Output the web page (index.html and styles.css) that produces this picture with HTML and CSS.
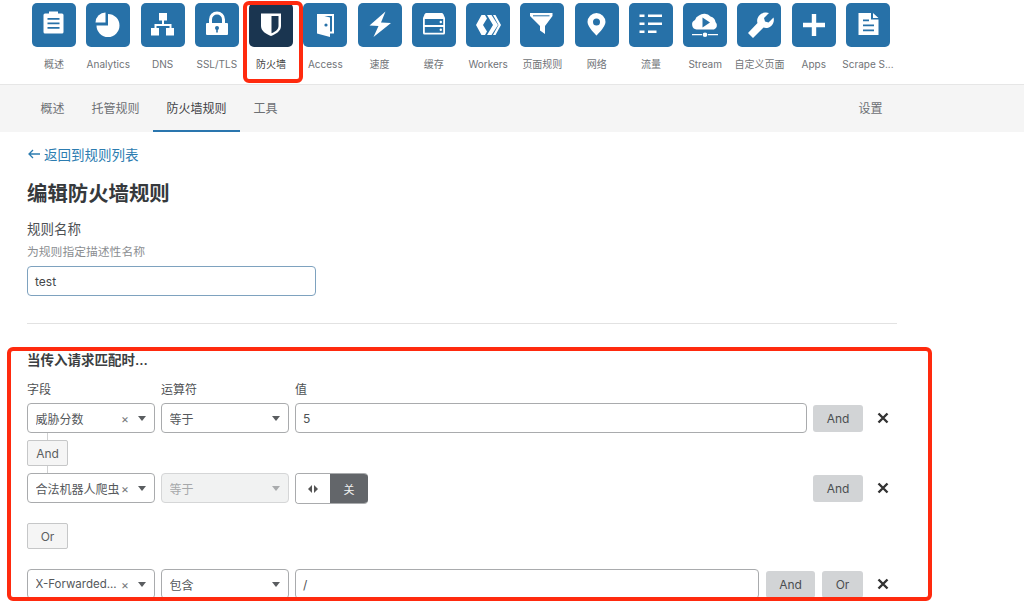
FILE: index.html
```html
<!DOCTYPE html>
<html lang="zh">
<head>
<meta charset="utf-8">
<title>编辑防火墙规则</title>
<link rel="stylesheet" href="styles.css">
</head>
<body>
<div class="page">
  <header class="apps">
    <div class="app"><div class="tile"><svg viewBox="0 0 44 44"><path fill="#fff" d="M17 8.500h9v2h4a1.500 1.500 0 0 1 1.500 1.500v17a1.500 1.500 0 0 1-1.500 1.500H13a1.500 1.500 0 0 1-1.500-1.500V12a1.500 1.500 0 0 1 1.500-1.500h4z"/><path fill="#2771a8" d="M15.500 15h12v1.800h-12zM15.500 19.500h12v1.800h-12zM15.500 24h12v1.800h-12z"/></svg></div><span class="app-name">概述</span></div>
    <div class="app"><div class="tile"><svg viewBox="0 0 44 44"><path fill="#fff" d="M22 11a11.500 11.500 0 1 1-11.500 11.500H22z"/><path fill="#fff" d="M19.500 9.500v10h-10a10 10 0 0 1 10-10z"/></svg></div><span class="app-name">Analytics</span></div>
    <div class="app"><div class="tile"><svg viewBox="0 0 44 44"><path fill="#fff" d="M18 10h8v7.500h-3v3.500h7.500v4H33v7.500h-8V25h3.500v-2h-13v2H18v7.500h-8V25h3.500v-4H21v-3.500h-3z"/></svg></div><span class="app-name">DNS</span></div>
    <div class="app"><div class="tile"><svg viewBox="0 0 44 44"><path fill="none" stroke="#fff" stroke-width="3" d="M15.500 21v-4.500a6.500 6.500 0 0 1 13 0V21"/><rect fill="#fff" x="11" y="20" width="22" height="12" rx="1"/><circle fill="#2771a8" cx="22" cy="25" r="2"/><rect fill="#2771a8" x="21.200" y="25.500" width="1.600" height="4"/></svg></div><span class="app-name">SSL/TLS</span></div>
    <div class="app"><div class="tile tile-active"><svg viewBox="0 0 44 44"><path fill="#fff" d="M12 10.500h20V23c0 5-5 8-10 10C17 31 12 28 12 23z"/><path fill="#1a3550" d="M22.500 13h7v10c0 3.500-3.500 5.800-7 7.300z"/></svg></div><span class="app-name app-name-dark">防火墙</span></div>
    <div class="app"><div class="tile"><svg viewBox="0 0 44 44"><path fill="#fff" d="M14 11h17v19.500h-4v-2h2V13H14z"/><path fill="#fff" d="M14 11l13 3.500V34l-13-3.500z"/><circle fill="#2771a8" cx="23" cy="22" r="1.600"/></svg></div><span class="app-name">Access</span></div>
    <div class="app"><div class="tile"><svg viewBox="0 0 44 44"><path fill="#fff" d="M27.500 8.500L23 19.500l10 .5-17.500 14 5-11-9-.5z"/></svg></div><span class="app-name">速度</span></div>
    <div class="app"><div class="tile"><svg viewBox="0 0 44 44"><path fill="#fff" d="M14.500 10h15c1 0 1.600.6 2 1.500L33 15v15a1.500 1.500 0 0 1-1.500 1.500h-19A1.500 1.500 0 0 1 11 30V15l1.500-3.500c.4-.9 1-1.500 2-1.500z"/><path fill="#2771a8" d="M12.800 16h18.400v6H12.800zM12.800 24h18.400v5.700H12.800z"/><circle fill="#fff" cx="28.800" cy="19" r="1.200"/><circle fill="#fff" cx="28.800" cy="26.800" r="1.200"/></svg></div><span class="app-name">缓存</span></div>
    <div class="app"><div class="tile"><svg viewBox="0 0 44 44"><path fill="#fff" d="M15.500 12H19l2 3.500-4 6.500 4 6.500-2 3.500h-3.500L10 22zM21 12h4.500L32 22l-6.500 10H21l6-10zM27 12h2.500L35 22l-5.500 10H27l5.500-10z"/></svg></div><span class="app-name">Workers</span></div>
    <div class="app"><div class="tile"><svg viewBox="0 0 44 44"><path fill="#fff" d="M10 10h22.500v3L25 23v8l-5-3.500V23L10 13z"/><path fill="#2771a8" d="M13 12.300h16.500v1H13z"/></svg></div><span class="app-name">页面规则</span></div>
    <div class="app"><div class="tile"><svg viewBox="0 0 44 44"><path fill="#fff" fill-rule="evenodd" d="M21.500 10a9 9 0 0 1 9 9c0 5-9 13.500-9 13.500S12.500 24 12.500 19a9 9 0 0 1 9-9zm0 5.500a3.500 3.500 0 1 0 0 7 3.500 3.500 0 0 0 0-7z"/></svg></div><span class="app-name">网络</span></div>
    <div class="app"><div class="tile"><svg viewBox="0 0 44 44"><path fill="#fff" d="M10.500 11.500h5v2.600h-5zM19 11.500h14v2.600H19zM10.500 19.500h5v2.600h-5zM19 19.500h14v2.600H19zM10.500 27.500h5v2.600h-5zM19 27.500h8.500v2.600H19z"/></svg></div><span class="app-name">流量</span></div>
    <div class="app"><div class="tile"><svg viewBox="0 0 44 44"><path fill="#fff" d="M13.500 26.500a5 5 0 0 1-1.500-9.500 6.500 6.500 0 0 1 4-4.500 8.500 8.500 0 0 1 11.500 1 6.500 6.500 0 0 1 5 5.500 4.500 4.500 0 0 1-1.500 7.500z"/><path fill="#2771a8" d="M19.500 14.500l7.500 5-7.500 5z"/><path fill="#fff" d="M9 31h10v1.300H9zM25 31h10v1.300H25z"/><circle fill="#fff" cx="22" cy="31.700" r="2.300"/></svg></div><span class="app-name">Stream</span></div>
    <div class="app"><div class="tile"><svg viewBox="0 0 44 44"><path fill="#fff" d="M28 9.500a8 8 0 0 1 4 .5l-5 5 1 3.500 3.500 1 5-5c1 3.500 0 7-3 9-2.500 1.700-5 1.800-7 1L16 35l-5-5 9.500-10c-.8-2.500-.3-5 1.500-7.300 1.500-2 3.500-3 6-3.200z"/></svg></div><span class="app-name">自定义页面</span></div>
    <div class="app"><div class="tile"><svg viewBox="0 0 44 44"><path fill="#fff" d="M19.800 11h4.400v8.800H33v4.400h-8.800V33h-4.400v-8.800H11v-4.400h8.800z"/></svg></div><span class="app-name">Apps</span></div>
    <div class="app"><div class="tile"><svg viewBox="0 0 44 44"><path fill="#fff" d="M12.500 10H25v6.500h7.500V32h-20zM27 10l5.500 5H27z"/><path fill="#2771a8" d="M17 16.500h6v1.800h-6zM17 21.500h11v1.800H17zM17 26.500h11v1.800H17z"/></svg></div><span class="app-name">Scrape S...</span></div>
  </header>

  <nav class="tabs">
    <a class="tab">概述</a>
    <a class="tab">托管规则</a>
    <a class="tab tab-active">防火墙规则</a>
    <a class="tab">工具</a>
    <a class="tab tab-end">设置</a>
  </nav>

  <main class="content">
    <a class="back"><svg class="back-arrow" viewBox="0 0 12 10"><path fill="none" stroke="#2c7cb0" stroke-width="1.300" d="M12 5H1M5 1L1 5l4 4"/></svg>返回到规则列表</a>
    <h1 class="title">编辑防火墙规则</h1>
    <div class="name-label">规则名称</div>
    <div class="name-help">为规则指定描述性名称</div>
    <div class="name-input">test</div>
    <hr class="divider">

    <h2 class="section">当传入请求匹配时...</h2>
    <div class="heads">
      <span class="head">字段</span>
      <span class="head">运算符</span>
      <span class="head">值</span>
    </div>

    <div class="row">
      <div class="select"><span class="select-text">威胁分数</span><span class="clear">×</span><span class="caret"></span></div>
      <div class="select"><span class="select-text">等于</span><span class="caret"></span></div>
      <div class="field">5</div>
      <button class="btn">And</button>
      <span class="remove"><svg viewBox="0 0 12 12"><path stroke="#333" stroke-width="2.400" d="M1.500 1.500l9 9M10.500 1.500l-9 9"/></svg></span>
    </div>

    <div class="join join-and"><button class="join-btn">And</button></div>

    <div class="row">
      <div class="select"><span class="select-text">合法机器人爬虫</span><span class="clear">×</span><span class="caret"></span></div>
      <div class="select select-off"><span class="select-text">等于</span><span class="caret"></span></div>
      <div class="toggle"><span class="toggle-knob"><svg viewBox="0 0 10 8"><path fill="#555" d="M4 0v8L0 4zM6 0v8l4-4z"/></svg></span><span class="toggle-off">关</span></div>
      <button class="btn btn-push">And</button>
      <span class="remove"><svg viewBox="0 0 12 12"><path stroke="#333" stroke-width="2.400" d="M1.500 1.500l9 9M10.500 1.500l-9 9"/></svg></span>
    </div>

    <div class="join join-or"><button class="join-btn">Or</button></div>

    <div class="row">
      <div class="select"><span class="select-text select-latin">X-Forwarded...</span><span class="clear">×</span><span class="caret"></span></div>
      <div class="select"><span class="select-text">包含</span><span class="caret"></span></div>
      <div class="field">/</div>
      <button class="btn btn-and-short">And</button>
      <button class="btn btn-or">Or</button>
      <span class="remove"><svg viewBox="0 0 12 12"><path stroke="#333" stroke-width="2.400" d="M1.500 1.500l9 9M10.500 1.500l-9 9"/></svg></span>
    </div>
  </main>

  <div class="mark mark-tile"></div>
  <div class="mark mark-rules"></div>
</div>
</body>
</html>
```
FILE: styles.css
```css
* { box-sizing: border-box; }
html, body { margin: 0; padding: 0; }
body {
  font-family: Inter, "Noto Sans CJK SC", sans-serif;
  color: #4a4d50;
  background: #fff;
}
.page { position: relative; width: 1024px; height: 601px; overflow: hidden; }

.apps {
  display: flex;
  height: 85px;
  padding: 3px 0 0 26.870px;
  border-bottom: 1px solid #e6e6e6;
}
.app { width: 54.270px; display: flex; flex-direction: column; align-items: center; }
.tile { width: 44px; height: 44px; border-radius: 5px; background: #2771a8; }
.tile svg { display: block; width: 44px; height: 44px; }
.tile-active { background: #1a3550; }
.app-name {
  margin-top: 10px;
  font-size: 10px;
  line-height: 14px;
  color: #707377;
  white-space: nowrap;
}
.app-name-dark { color: #444; }

.tabs {
  display: flex;
  height: 47px;
  padding-left: 27px;
  background: #f5f5f5;
}
.tab {
  display: flex;
  align-items: center;
  padding: 0 13.500px 2px;
  font-size: 12px;
  color: #6d7074;
}
.tab-active { color: #3f4245; border-bottom: 2px solid #2a76ae; padding-bottom: 0; }
.tab-end { margin-left: auto; margin-right: 128px; }

.content { padding: 13px 0 0 27px; }
.back {
  display: flex;
  align-items: center;
  height: 18px;
  font-size: 13.500px;
  color: #2c7cb0;
}
.back-arrow { width: 12px; height: 10px; margin: 0 4px 0 1px; }
.title { margin: 18px 0 0; font-size: 20.400px; line-height: 26px; font-weight: 600; color: #36393c; }
.name-label { margin-top: 13px; font-size: 13.500px; line-height: 18px; color: #4e5154; }
.name-help { margin-top: 6px; font-size: 11.800px; line-height: 16px; color: #8b8e91; }
.name-input {
  width: 289px;
  height: 30px;
  margin-top: 6px;
  padding: 0 7px;
  display: flex;
  align-items: center;
  font-size: 12px;
  color: #44474a;
  border: 1px solid #7ea2bf;
  border-radius: 4px;
}
.divider { width: 870px; height: 1px; margin: 27px 0 0; border: 0; background: #e2e2e2; }

.section { margin: 27px 0 0; font-size: 13.500px; line-height: 18px; font-weight: 600; color: #3c3f42; }
.heads { display: flex; gap: 6px; margin-top: 13px; }
.head { width: 128px; font-size: 12px; line-height: 16px; color: #4e5154; }

.row { display: flex; align-items: center; gap: 6px; width: 866px; height: 30px; }
.heads + .row { margin-top: 5px; }
.select {
  flex: none;
  display: flex;
  align-items: center;
  width: 128px;
  height: 30px;
  padding: 0 8px 0 7.500px;
  font-size: 12px;
  color: #55585b;
  background: #fff;
  border: 1px solid #a9abad;
  border-radius: 4px;
}
.select-text { flex: 1; white-space: nowrap; overflow: hidden; }
.select-latin { font-size: 11.500px; }
.select-off { background: #f1f2f2; color: #a6a8aa; border-color: #d5d6d7; }
.select-off .caret { border-top-color: #a9abad; }
.clear { flex: none; margin: 0 9px 0 1px; font-size: 12px; color: #77797c; }
.caret {
  flex: none;
  width: 0;
  height: 0;
  border-left: 4.500px solid transparent;
  border-right: 4.500px solid transparent;
  border-top: 5px solid #5a5d60;
}
.field {
  flex: 1;
  height: 30px;
  display: flex;
  align-items: center;
  padding: 0 7px;
  font-size: 12px;
  color: #4e5154;
  border: 1px solid #a9abad;
  border-radius: 4px;
}
.btn {
  flex: none;
  width: 50px;
  height: 27px;
  padding: 0;
  border: 0;
  border-radius: 3px;
  background: #d2d4d6;
  font: 12px Inter, sans-serif;
  color: #4a4d50;
}
.btn-push { margin-left: auto; }
.btn-and-short { width: 49px; margin: 0 1px; }
.btn-or { width: 41px; }
.remove { flex: none; width: 20px; height: 12px; margin-left: 4px; display: flex; justify-content: center; }
.remove svg { display: block; width: 12px; height: 12px; }

.toggle {
  flex: none;
  display: flex;
  width: 73px;
  height: 31px;
  margin-top: 1px;
  border-radius: 4px;
  overflow: hidden;
  border: 1px solid #a9abad;
  border-right: 0;
}
.toggle-knob { width: 34px; display: flex; align-items: center; justify-content: center; background: #fff; }
.toggle-knob svg { width: 10px; height: 8px; }
.toggle-off {
  flex: 1;
  display: flex;
  align-items: center;
  justify-content: center;
  font-size: 11px;
  color: #f2f2f2;
  background: #63666a;
}

.join { position: relative; width: 41px; }
.join-and { height: 40px; padding-top: 7px; }
.join-and::before {
  content: "";
  position: absolute;
  left: 20px;
  top: 0;
  width: 1px;
  height: 40px;
  background: #d0d1d2;
}
.join-or { height: 26px; margin: 20px 0; }
.join-btn {
  position: relative;
  display: block;
  width: 41px;
  height: 26px;
  padding: 0;
  font: 12px Inter, sans-serif;
  color: #5b5e61;
  background: #f5f5f5;
  border: 1px solid #c6c7c8;
  border-radius: 2px;
}

.mark { position: absolute; border: 4.500px solid #ff2a0e; border-radius: 6px; }
.mark-tile { left: 243px; top: 1px; width: 60px; height: 82px; }
.mark-rules { left: 7px; top: 347px; width: 925px; height: 254px; }
```
